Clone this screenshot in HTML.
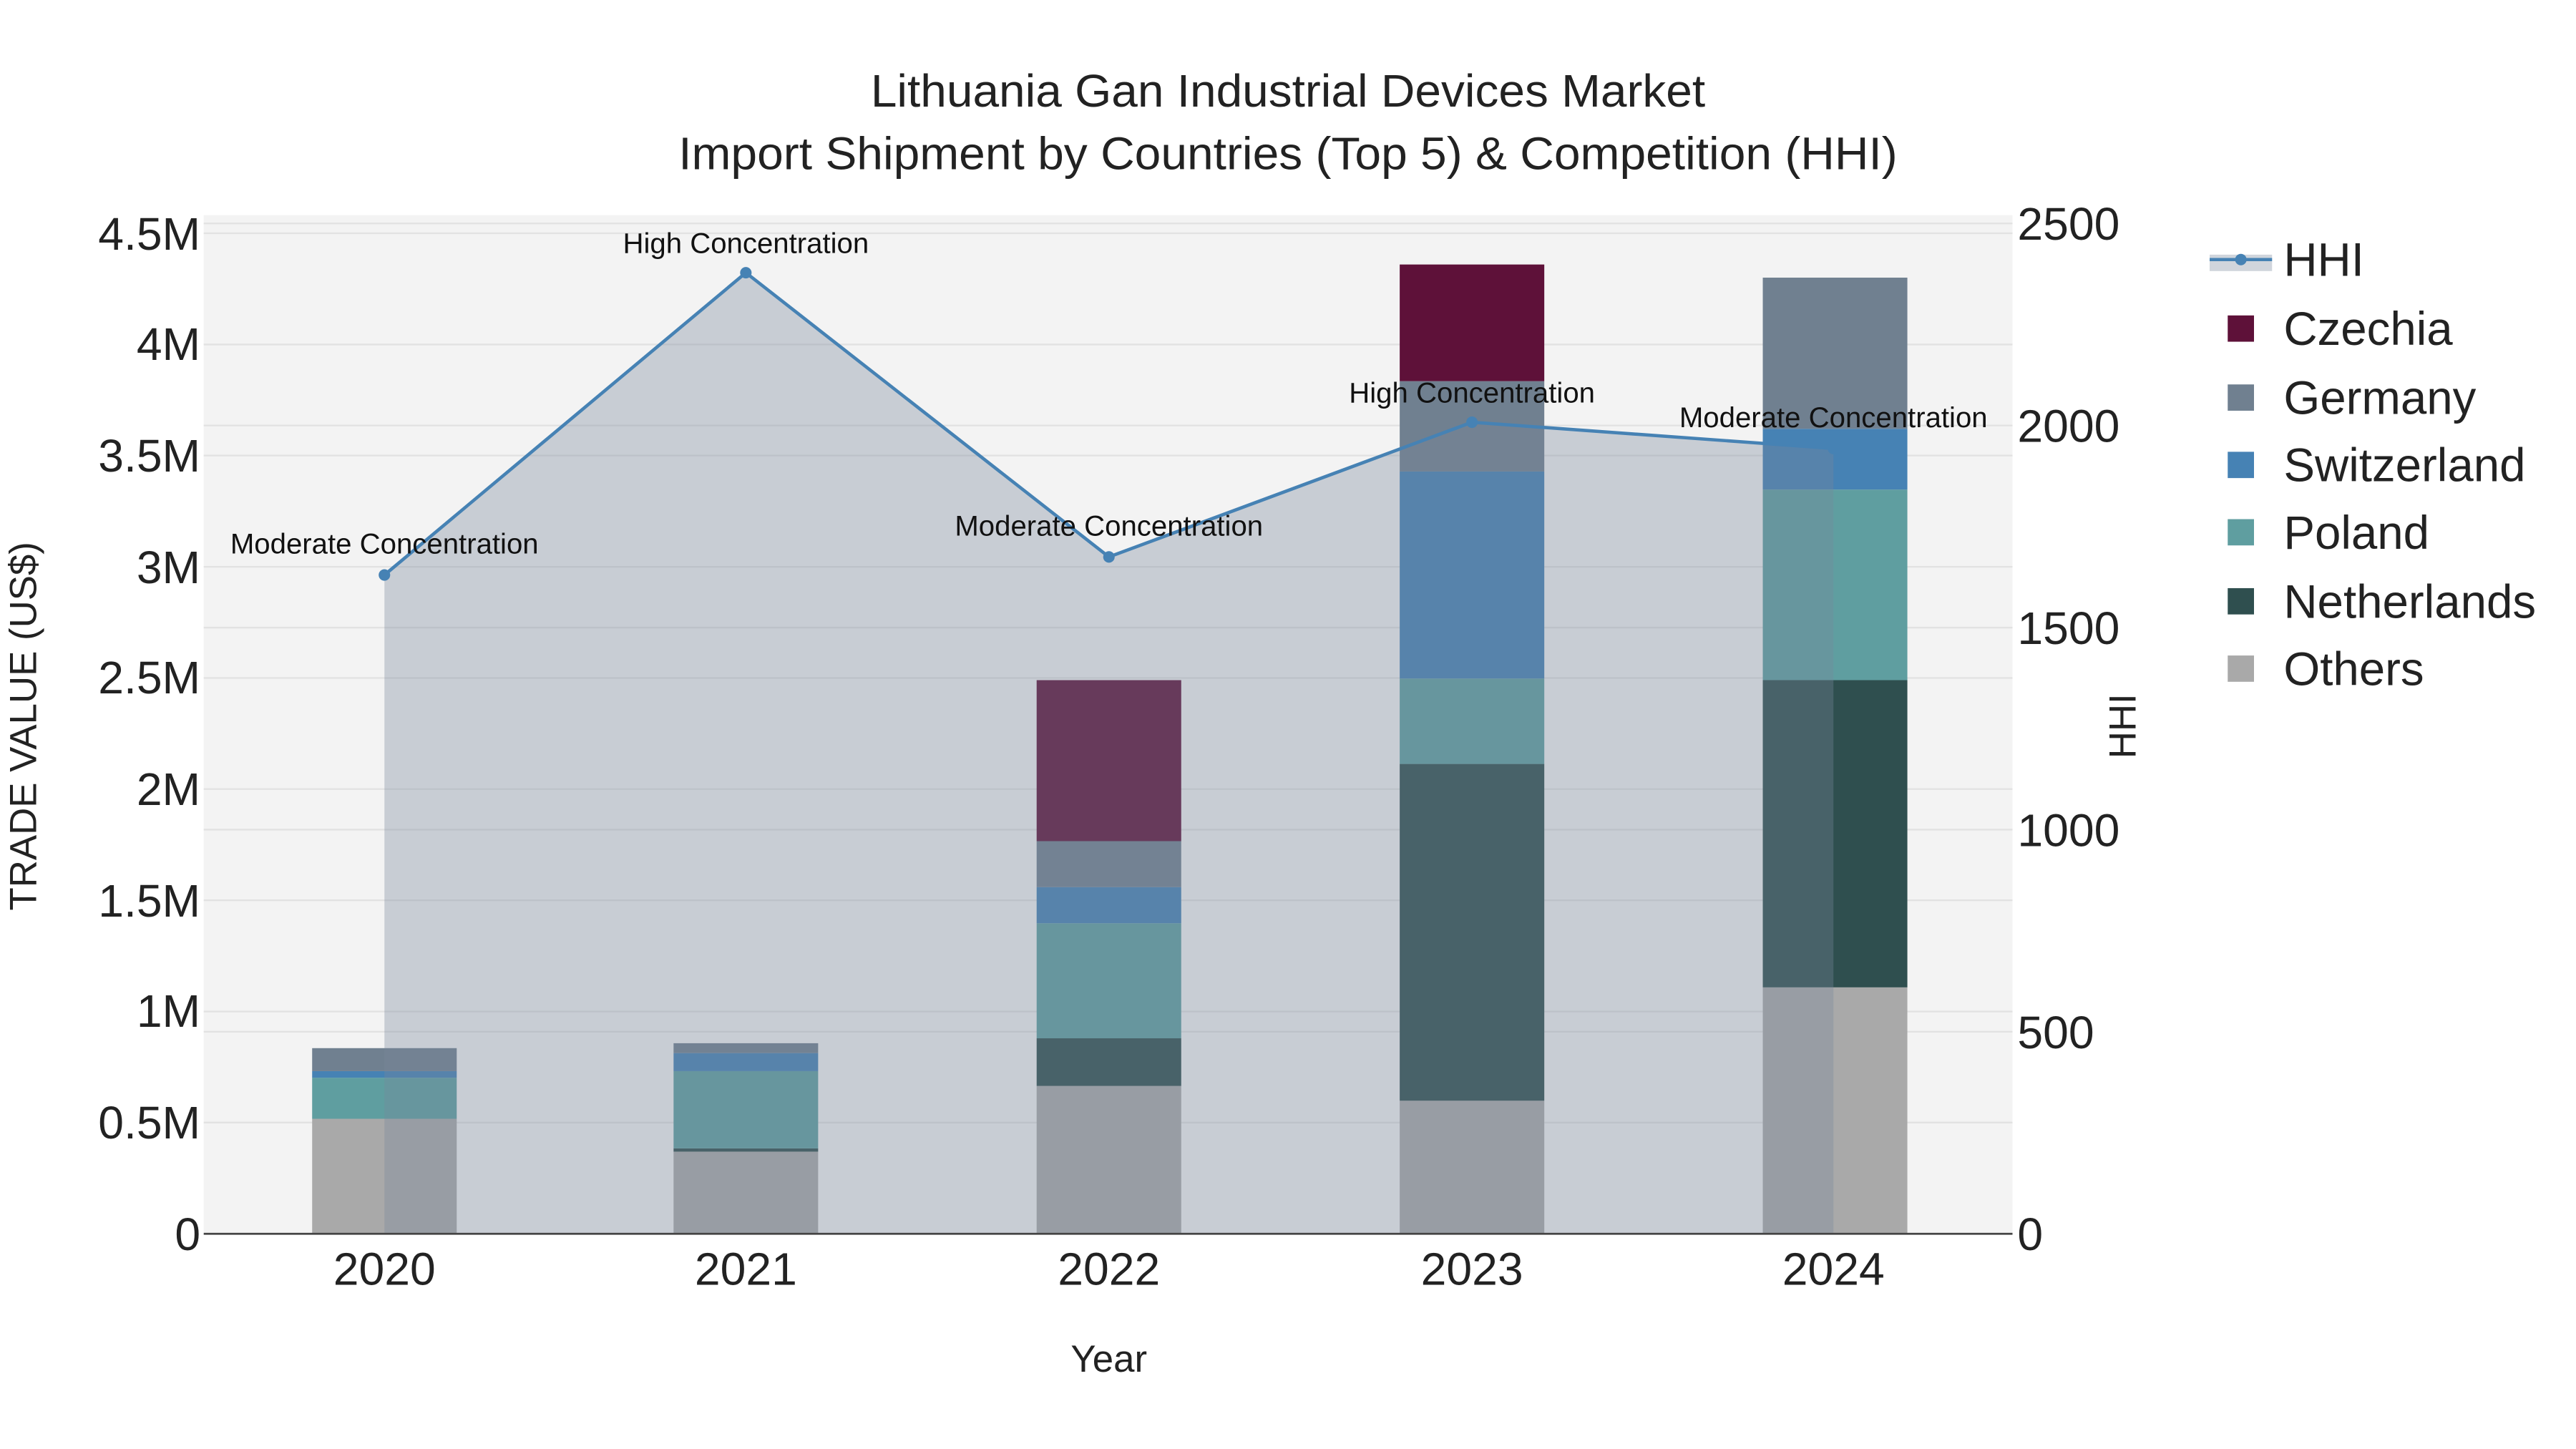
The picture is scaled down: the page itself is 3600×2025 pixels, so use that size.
<!DOCTYPE html>
<html><head><meta charset="utf-8"><style>html,body{margin:0;padding:0;background:#fff}svg{display:block}</style></head>
<body>
<svg width="3600" height="2025" viewBox="0 0 1568 882" xmlns="http://www.w3.org/2000/svg" font-family="Liberation Sans, Arial, sans-serif">
<rect x="0" y="0" width="1568" height="882" fill="#fff"/>
<rect x="124" y="131" width="1101" height="620" fill="#f3f3f3"/>
<g stroke="#e2e2e2" stroke-width="1">
<line x1="124" x2="1225" y1="683.3" y2="683.3"/><line x1="124" x2="1225" y1="615.7" y2="615.7"/><line x1="124" x2="1225" y1="548" y2="548"/><line x1="124" x2="1225" y1="480.3" y2="480.3"/><line x1="124" x2="1225" y1="412.7" y2="412.7"/><line x1="124" x2="1225" y1="345" y2="345"/><line x1="124" x2="1225" y1="277.3" y2="277.3"/><line x1="124" x2="1225" y1="209.7" y2="209.7"/><line x1="124" x2="1225" y1="142" y2="142"/>
<line x1="124" x2="1225" y1="628" y2="628"/><line x1="124" x2="1225" y1="505" y2="505"/><line x1="124" x2="1225" y1="382" y2="382"/><line x1="124" x2="1225" y1="259" y2="259"/><line x1="124" x2="1225" y1="136" y2="136"/>
</g>
<g>
<rect x="190" y="681" width="88" height="70" fill="#a9a9a9"/>
<rect x="190" y="656" width="88" height="25" fill="#5f9ea0"/>
<rect x="190" y="652" width="88" height="4" fill="#4682b4"/>
<rect x="190" y="638" width="88" height="14" fill="#708090"/>

<rect x="410" y="701" width="88" height="50" fill="#a9a9a9"/>
<rect x="410" y="699" width="88" height="2" fill="#2f4f4f"/>
<rect x="410" y="652" width="88" height="47" fill="#5f9ea0"/>
<rect x="410" y="641" width="88" height="11" fill="#4682b4"/>
<rect x="410" y="635" width="88" height="6" fill="#708090"/>

<rect x="631" y="661" width="88" height="90" fill="#a9a9a9"/>
<rect x="631" y="632" width="88" height="29" fill="#2f4f4f"/>
<rect x="631" y="562" width="88" height="70" fill="#5f9ea0"/>
<rect x="631" y="540" width="88" height="22" fill="#4682b4"/>
<rect x="631" y="512" width="88" height="28" fill="#708090"/>
<rect x="631" y="414" width="88" height="98" fill="#5e1139"/>

<rect x="852" y="670" width="88" height="81" fill="#a9a9a9"/>
<rect x="852" y="465" width="88" height="205" fill="#2f4f4f"/>
<rect x="852" y="413" width="88" height="52" fill="#5f9ea0"/>
<rect x="852" y="287" width="88" height="126" fill="#4682b4"/>
<rect x="852" y="232" width="88" height="55" fill="#708090"/>
<rect x="852" y="161" width="88" height="71" fill="#5e1139"/>

<rect x="1073" y="601" width="88" height="150" fill="#a9a9a9"/>
<rect x="1073" y="414" width="88" height="187" fill="#2f4f4f"/>
<rect x="1073" y="298" width="88" height="116" fill="#5f9ea0"/>
<rect x="1073" y="261" width="88" height="37" fill="#4682b4"/>
<rect x="1073" y="169" width="88" height="92" fill="#708090"/>
</g>
<polygon points="234,751 234,350 454,166 675,339 896,257 1116,273 1116,751" fill="rgba(120,134,154,0.35)"/>
<line x1="124" x2="1225" y1="751" y2="751" stroke="#444" stroke-width="1.2"/>
<polyline points="234,350 454,166 675,339 896,257 1116,273" fill="none" stroke="#4682b4" stroke-width="2"/>
<g fill="#4682b4"><circle cx="234" cy="350" r="3.5"/><circle cx="454" cy="166" r="3.5"/><circle cx="675" cy="339" r="3.5"/><circle cx="896" cy="257" r="3.5"/><circle cx="1116" cy="273" r="3.5"/></g>
<g font-size="17.5" fill="#111" text-anchor="middle">
<text x="234" y="337">Moderate Concentration</text>
<text x="454" y="154">High Concentration</text>
<text x="675" y="326">Moderate Concentration</text>
<text x="896" y="245">High Concentration</text>
<text x="1116" y="260">Moderate Concentration</text>
</g>
<g font-size="28" fill="#222" text-anchor="end">
<text x="122" y="761">0</text><text x="122" y="693">0.5M</text><text x="122" y="625">1M</text><text x="122" y="558">1.5M</text><text x="122" y="490">2M</text><text x="122" y="422">2.5M</text><text x="122" y="355">3M</text><text x="122" y="287">3.5M</text><text x="122" y="219">4M</text><text x="122" y="152">4.5M</text>
</g>
<g font-size="28" fill="#222" text-anchor="start">
<text x="1228" y="761">0</text><text x="1228" y="638">500</text><text x="1228" y="515">1000</text><text x="1228" y="392">1500</text><text x="1228" y="269">2000</text><text x="1228" y="146">2500</text>
</g>
<g font-size="28" fill="#222" text-anchor="middle">
<text x="234" y="782">2020</text><text x="454" y="782">2021</text><text x="675" y="782">2022</text><text x="896" y="782">2023</text><text x="1116" y="782">2024</text>
</g>
<text x="675" y="835" font-size="23" text-anchor="middle" fill="#222">Year</text>
<text transform="translate(22,442) rotate(-90)" font-size="23" text-anchor="middle" fill="#222">TRADE VALUE (US$)</text>
<text transform="translate(1300,442) rotate(-90)" font-size="23" text-anchor="middle" fill="#222">HHI</text>
<g font-size="28" fill="#222" text-anchor="middle">
<text x="784" y="65" textLength="508" lengthAdjust="spacingAndGlyphs">Lithuania Gan Industrial Devices Market</text>
<text x="784" y="103" textLength="742" lengthAdjust="spacingAndGlyphs">Import Shipment by Countries (Top 5) &amp; Competition (HHI)</text>
</g>
<rect x="1345" y="155" width="38" height="10" fill="rgba(120,134,154,0.35)"/>
<line x1="1345" x2="1383" y1="158" y2="158" stroke="#4682b4" stroke-width="2"/>
<circle cx="1364" cy="158" r="3.5" fill="#4682b4"/>
<g>
<rect x="1356" y="192" width="16" height="16" fill="#5e1139"/>
<rect x="1356" y="234" width="16" height="16" fill="#708090"/>
<rect x="1356" y="275" width="16" height="16" fill="#4682b4"/>
<rect x="1356" y="316" width="16" height="16" fill="#5f9ea0"/>
<rect x="1356" y="358" width="16" height="16" fill="#2f4f4f"/>
<rect x="1356" y="399" width="16" height="16" fill="#a9a9a9"/>
</g>
<g font-size="28.5" fill="#222">
<text x="1390" y="168">HHI</text>
<text x="1390" y="210">Czechia</text>
<text x="1390" y="252">Germany</text>
<text x="1390" y="293">Switzerland</text>
<text x="1390" y="334">Poland</text>
<text x="1390" y="376">Netherlands</text>
<text x="1390" y="417">Others</text>
</g>
</svg>
</body></html>
